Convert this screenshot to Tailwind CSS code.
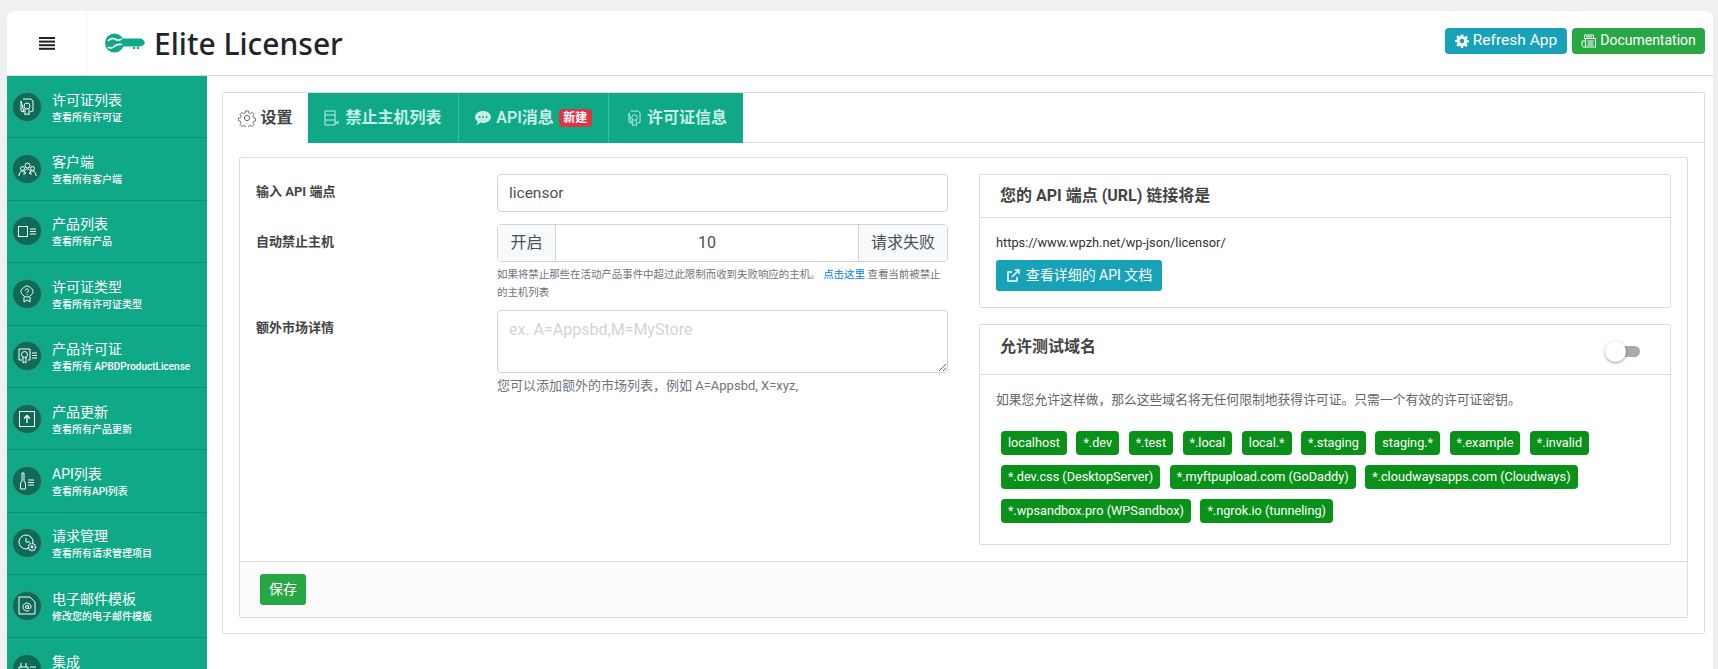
<!DOCTYPE html>
<html>
<head>
<meta charset="utf-8" />
<title>Elite Licenser</title>
<script src="https://cdn.jsdelivr.net/npm/@tailwindcss/browser@4"></script>
</head>
<body class="h-[669px] overflow-hidden bg-[#f0f0f0] font-['Roboto','Noto_Sans_CJK_SC',sans-serif] text-[#444]">
<div class="ml-[7px] mt-[11px] h-[658px] w-[1706px] flex flex-col bg-white rounded-tl-lg rounded-tr-lg overflow-hidden">

	<!-- header -->
	<header class="h-[65px] shrink-0 flex items-center border-b border-[#ddd]">
		<div class="w-[80px] h-full flex items-center justify-center border-r border-[#f2f2f2]">
			<svg width="16" height="13" viewBox="0 0 16 13" fill="#222"><rect y="0" width="16" height="2"/><rect y="3.6" width="16" height="2"/><rect y="7.2" width="16" height="2"/><rect y="10.8" width="16" height="2"/></svg>
		</div>
		<svg class="ml-[18px]" width="40" height="20" viewBox="0 0 40 20" fill="#0fa987">
			<circle cx="9.500" cy="10" r="9.500"/>
			<path d="M15 5.500h20.500l3 1.500 1.500 3-1.500 2-3 1.500H15z"/>
			<rect x="28" y="14" width="2" height="2"/><rect x="32" y="14" width="2" height="2"/>
			<path d="M3 8c2-3 6-3 8-1.500s4 0 6-.5M3 14c2 1.500 5 1 7-1s4-2 7-1.500" stroke="#fff" stroke-width="1.700" fill="none"/>
		</svg>
		<h1 class="ml-[9px] mt-[1px] text-[30px] leading-none font-medium text-[#212529] font-['Noto_Sans',sans-serif]">Elite Licenser</h1>
		<div class="ml-auto mr-[8px] flex gap-[5px] -mt-[5px]">
			<a class="w-[122px] h-[26px] flex items-center justify-center gap-[4px] rounded bg-[#17a2b8] text-white text-[15.500px]">
				<svg width="14" height="14" viewBox="0 0 24 24" fill="#fff"><path d="M10 1h4l.6 3.200 2 .8 2.700-1.800 2.800 2.800-1.800 2.700.8 2L24 11v3l-3.200.6-.8 2 1.800 2.700-2.800 2.800-2.700-1.800-2 .8L13.600 24h-3.200l-.6-3.200-2-.8-2.700 1.800-2.800-2.800 1.800-2.700-.8-2L0 13.600v-3.200l3.200-.6.800-2L2.200 5.100 5 2.300l2.700 1.800 2-.8zM12 8a4 4 0 1 0 0 8 4 4 0 0 0 0-8z" fill-rule="evenodd"/></svg>
				Refresh App
			</a>
			<a class="w-[133px] h-[26px] flex items-center justify-center gap-[4px] rounded bg-[#28a745] text-white text-[14px]">
				<svg width="15" height="14" viewBox="0 0 15 14" fill="none" stroke="#fff" stroke-width="1"><path d="M3.500 5V1h9v3M5 2.800h6"/><rect x="4.500" y="4.500" width="10" height="8.500"/><path d="M6.500 7h6M6.500 9h6M6.500 11h6M4.500 7H1v3.500A2 2 0 0 0 3 13h2"/></svg>
				Documentation
			</a>
		</div>
	</header>

	<div class="flex flex-1 min-h-0">
		<!-- sidebar -->
		<aside class="w-[200px] shrink-0 bg-[#0fa987] text-white overflow-hidden">
			<div class="h-[62.400px] flex items-center border-b border-[#0c8f73]">
				<div class="ml-[6px] w-[28px] h-[28px] shrink-0 rounded-full bg-[#0d6b57] ring-1 ring-[#3d8f7e] flex items-center justify-center">
					<svg width="14" height="18" viewBox="0 0 14 18" fill="none" stroke="#fff" stroke-width="1"><path d="M3 1h8l2 2v10l-3 1M4 14l-3-1V3z"/><circle cx="7" cy="8" r="3"/><path d="M5 11v6l2-1.500L9 17v-6"/></svg>
				</div>
				<div class="ml-[11px] mt-[1px]">
					<div class="text-[14px] leading-[21px]">许可证列表</div>
					<div class="text-[10px] leading-[14px] font-medium">查看所有许可证</div>
				</div>
			</div>
			<div class="h-[62.400px] flex items-center border-b border-[#0c8f73]">
				<div class="ml-[6px] w-[28px] h-[28px] shrink-0 rounded-full bg-[#0d6b57] ring-1 ring-[#3d8f7e] flex items-center justify-center">
					<svg width="19" height="15" viewBox="0 0 19 15" fill="none" stroke="#fff" stroke-width="1"><circle cx="9.500" cy="3.500" r="2.500"/><circle cx="4.500" cy="6.500" r="2"/><circle cx="14.500" cy="6.500" r="2"/><path d="M1 14c0-3 1.500-5 3.500-5s3 1 3 3M18 14c0-3-1.500-5-3.500-5s-3 1-3 3M6 13c0-4 1.500-6 3.500-6s3.500 2 3.500 6"/></svg>
				</div>
				<div class="ml-[11px] mt-[1px]">
					<div class="text-[14px] leading-[21px]">客户端</div>
					<div class="text-[10px] leading-[14px] font-medium">查看所有客户端</div>
				</div>
			</div>
			<div class="h-[62.400px] flex items-center border-b border-[#0c8f73]">
				<div class="ml-[6px] w-[28px] h-[28px] shrink-0 rounded-full bg-[#0d6b57] ring-1 ring-[#3d8f7e] flex items-center justify-center">
					<svg width="18" height="11" viewBox="0 0 18 11" fill="none" stroke="#fff" stroke-width="1"><rect x=".5" y=".5" width="9" height="10"/><path d="M12 3h6M12 5.500h6M12 8h6"/></svg>
				</div>
				<div class="ml-[11px] mt-[1px]">
					<div class="text-[14px] leading-[21px]">产品列表</div>
					<div class="text-[10px] leading-[14px] font-medium">查看所有产品</div>
				</div>
			</div>
			<div class="h-[62.400px] flex items-center border-b border-[#0c8f73]">
				<div class="ml-[6px] w-[28px] h-[28px] shrink-0 rounded-full bg-[#0d6b57] ring-1 ring-[#3d8f7e] flex items-center justify-center">
					<svg width="14" height="18" viewBox="0 0 14 18" fill="none" stroke="#fff" stroke-width="1"><path d="M7 1c2 0 3 1 3.500 2C12 3 13 5 13 6.500S12 9.500 11 10c-1 1.500-2.500 2-4 2s-3-.5-4-2C2 9.500 1 8 1 6.500S2 3 3.500 3C4 2 5 1 7 1z"/><path d="M4 12v5l3-2 3 2v-5"/><path d="M5.500 5.500C5.500 4.500 6 4 7 4s1.500.5 1.500 1.500S7 7 7 8M7 9v1"/></svg>
				</div>
				<div class="ml-[11px] mt-[1px]">
					<div class="text-[14px] leading-[21px]">许可证类型</div>
					<div class="text-[10px] leading-[14px] font-medium">查看所有许可证类型</div>
				</div>
			</div>
			<div class="h-[62.400px] flex items-center border-b border-[#0c8f73]">
				<div class="ml-[6px] w-[28px] h-[28px] shrink-0 rounded-full bg-[#0d6b57] ring-1 ring-[#3d8f7e] flex items-center justify-center">
					<svg width="19" height="16" viewBox="0 0 19 16" fill="none" stroke="#fff" stroke-width="1"><path d="M12 1H1v11h3M12 1v11h-2"/><circle cx="6.500" cy="6.500" r="3"/><path d="M5 9v6l1.500-1L8 15V9"/><path d="M14 5h5M14 7.500h5M14 10h5"/></svg>
				</div>
				<div class="ml-[11px] mt-[1px]">
					<div class="text-[14px] leading-[21px]">产品许可证</div>
					<div class="text-[10px] leading-[14px] font-medium">查看所有 APBDProductLicense</div>
				</div>
			</div>
			<div class="h-[62.400px] flex items-center border-b border-[#0c8f73]">
				<div class="ml-[6px] w-[28px] h-[28px] shrink-0 rounded-full bg-[#0d6b57] ring-1 ring-[#3d8f7e] flex items-center justify-center">
					<svg width="16" height="16" viewBox="0 0 16 16" fill="none" stroke="#fff" stroke-width="1"><rect x=".5" y=".5" width="15" height="15"/><path d="M8 12V5M5 7.500 8 4.500l3 3" stroke-width="1.300"/></svg>
				</div>
				<div class="ml-[11px] mt-[1px]">
					<div class="text-[14px] leading-[21px]">产品更新</div>
					<div class="text-[10px] leading-[14px] font-medium">查看所有产品更新</div>
				</div>
			</div>
			<div class="h-[62.400px] flex items-center border-b border-[#0c8f73]">
				<div class="ml-[6px] w-[28px] h-[28px] shrink-0 rounded-full bg-[#0d6b57] ring-1 ring-[#3d8f7e] flex items-center justify-center">
					<svg width="16" height="18" viewBox="0 0 16 18" fill="none" stroke="#fff" stroke-width="1"><path d="M3 1h2v8l1.500 2v6h-5v-6L3 9z"/><path d="M9 8h6M9 10.500h6M9 13h6"/></svg>
				</div>
				<div class="ml-[11px] mt-[1px]">
					<div class="text-[14px] leading-[21px]">API列表</div>
					<div class="text-[10px] leading-[14px] font-medium">查看所有API列表</div>
				</div>
			</div>
			<div class="h-[62.400px] flex items-center border-b border-[#0c8f73]">
				<div class="ml-[6px] w-[28px] h-[28px] shrink-0 rounded-full bg-[#0d6b57] ring-1 ring-[#3d8f7e] flex items-center justify-center">
					<svg width="19" height="18" viewBox="0 0 19 18" fill="none" stroke="#fff" stroke-width="1"><circle cx="8" cy="8" r="7"/><path d="M8 4v4h4"/><circle cx="14" cy="13" r="3.500" fill="#0d6b57" stroke-width="1.600" stroke-dasharray="1.500 .8"/><circle cx="14" cy="13" r="1" fill="#fff"/></svg>
				</div>
				<div class="ml-[11px] mt-[1px]">
					<div class="text-[14px] leading-[21px]">请求管理</div>
					<div class="text-[10px] leading-[14px] font-medium">查看所有请求管理项目</div>
				</div>
			</div>
			<div class="h-[62.400px] flex items-center border-b border-[#0c8f73]">
				<div class="ml-[6px] w-[28px] h-[28px] shrink-0 rounded-full bg-[#0d6b57] ring-1 ring-[#3d8f7e] flex items-center justify-center">
					<svg width="18" height="19" viewBox="0 0 18 19" fill="none" stroke="#fff" stroke-width="1"><path d="M1 1h11l5 5v12H1z"/><circle cx="9" cy="11" r="1.500"/><path d="M10.500 9.500v2.500c0 1.200 2.500 1 2.500-1a4 4 0 1 0-2 3.500"/></svg>
				</div>
				<div class="ml-[11px] mt-[1px]">
					<div class="text-[14px] leading-[21px]">电子邮件模板</div>
					<div class="text-[10px] leading-[14px] font-medium">修改您的电子邮件模板</div>
				</div>
			</div>
			<div class="h-[62.400px] flex items-center">
				<div class="ml-[6px] w-[28px] h-[28px] shrink-0 rounded-full bg-[#0d6b57] ring-1 ring-[#3d8f7e] flex items-center justify-center">
					<svg width="18" height="14" viewBox="0 0 18 14" fill="none" stroke="#fff" stroke-width="1"><path d="M3 1v4M8 1v4M1 5h9v8H1zM12 5h6M12 8h6"/></svg>
				</div>
				<div class="ml-[11px] mt-[1px]">
					<div class="text-[14px] leading-[21px]">集成</div>
					<div class="text-[10px] leading-[14px] font-medium">查看所有集成</div>
				</div>
			</div>
		</aside>

		<!-- main -->
		<main class="flex-1 min-w-0 pl-[15px] pr-[8px] pt-[16px]">
			<div class="h-[542px] border border-[#ddd] rounded-[2px] bg-white">
				<nav class="h-[50px] flex border-b border-[#ddd]">
					<a class="w-[85px] h-[50px] bg-white flex items-center justify-center gap-[4px] font-semibold text-[16px] text-[#444]">
						<svg width="18" height="18" viewBox="0 0 24 24" fill="none" stroke="#555" stroke-width="1.200"><circle cx="12" cy="12" r="3.500"/><path d="M10 1.500h4l.6 3 2.400 1 2.600-1.700 2.800 2.800-1.700 2.600 1 2.400 3 .6v4l-3 .6-1 2.400 1.700 2.600-2.800 2.800-2.600-1.700-2.400 1-.6 3h-4l-.6-3-2.400-1-2.600 1.700-2.800-2.800 1.700-2.600-1-2.400-3-.6v-4l3-.6 1-2.400-1.700-2.600 2.800-2.800 2.600 1.700 2.400-1z" transform="translate(1.200 1.200) scale(.9)"/></svg>
						设置
					</a>
					<a class="w-[151px] h-[50px] bg-[#0fa987] text-[#c5efe5] flex items-center justify-center gap-[5px] font-semibold text-[16px] border-r border-[#3dbba0]">
						<svg width="16" height="16" viewBox="0 0 16 16" fill="none" stroke="#c5efe5" stroke-width="1"><path d="M1 1h10v14H1zM1 5h10M1 10h10M11 11l4 3M15 11l-4 3"/></svg>
						禁止主机列表
					</a>
					<a class="w-[150px] h-[50px] bg-[#0fa987] text-[#c5efe5] flex items-center justify-center gap-[5px] font-semibold text-[16px] border-r border-[#3dbba0]">
						<svg width="16" height="14" viewBox="0 0 16 14" fill="#c5efe5"><path d="M8 0c4.400 0 8 2.700 8 6s-3.600 6-8 6c-1 0-2-.1-2.800-.4C4 12.800 2.400 14 1 14c1-1 1.600-2.300 1.700-3.600C1 9.300 0 7.700 0 6c0-3.300 3.600-6 8-6z"/><circle cx="4.500" cy="6" r="1" fill="#0fa987"/><circle cx="8" cy="6" r="1" fill="#0fa987"/><circle cx="11.500" cy="6" r="1" fill="#0fa987"/></svg>
						API消息
						<span class="px-[4.500px] h-[18px] flex items-center rounded-[4px] bg-[#dc3545] text-white text-[12px] font-bold">新建</span>
					</a>
					<a class="w-[134px] h-[50px] pl-[3px] bg-[#0fa987] text-[#c5efe5] flex items-center justify-center gap-[6px] font-semibold text-[16px]">
						<svg width="13" height="17" viewBox="0 0 14 18" fill="none" stroke="#c5efe5" stroke-width="1"><path d="M3 1h8l2 2v10l-3 1M4 14l-3-1V3z"/><circle cx="7" cy="8" r="3"/><path d="M5 11v6l2-1.500L9 17v-6"/></svg>
						许可证信息
					</a>
				</nav>

				<div class="mt-[14px] mx-[16px] h-[461px] border border-[#ddd] rounded-[2px] flex flex-col">
					<div class="flex-1 flex min-h-0">
						<!-- left form -->
						<div class="w-[739px] pl-[16px] pt-[16px]">
							<div class="flex">
								<label class="w-[241px] pt-[9px] text-[13px] font-bold leading-[18px]">输入 API 端点</label>
								<input class="w-[451px] h-[38px] px-[11px] border border-[#ced4da] rounded text-[15.500px] text-[#495057] bg-white outline-none" value="licensor" />
							</div>
							<div class="flex mt-[12px]">
								<label class="w-[241px] pt-[9px] text-[13px] font-bold leading-[18px]">自动禁止主机</label>
								<div class="w-[451px]">
									<div class="h-[38px] flex border border-[#ced4da] rounded text-[16px] text-[#495057]">
										<span class="w-[58px] flex items-center justify-center bg-[#f8f9fa] border-r border-[#ced4da]">开启</span>
										<span class="flex-1 flex items-center justify-center">10</span>
										<span class="w-[89px] flex items-center justify-center bg-[#f8f9fa] border-l border-[#ced4da]">请求失败</span>
									</div>
									<p class="mt-[4px] text-[10.450px] leading-[18px] text-[#6c757d]">如果将禁止那些在活动产品事件中超过此限制而收到失败响应的主机。 <a class="text-[#007bff]">点击这里</a> 查看当前被禁止的主机列表</p>
								</div>
							</div>
							<div class="flex mt-[8px]">
								<label class="w-[241px] pt-[9px] text-[13px] font-bold leading-[18px]">额外市场详情</label>
								<div class="w-[451px]">
									<textarea class="block w-full h-[63px] px-[11px] py-[7px] border border-[#ced4da] rounded text-[16px] leading-[24px] outline-none placeholder:text-[#d4d4d4]" placeholder="ex. A=Appsbd,M=MyStore"></textarea>
									<p class="mt-[4px] text-[13px] leading-[18px] text-[#6c757d]">您可以添加额外的市场列表，例如 A=Appsbd, X=xyz,</p>
								</div>
							</div>
						</div>

						<!-- right cards -->
						<div class="w-[692px] pt-[16px]">
							<section class="h-[134px] border border-[#ddd] rounded-[2px]">
								<h3 class="h-[43px] pl-[20px] flex items-center border-b border-[#ddd] text-[16px] font-bold">您的 API 端点 (URL) 链接将是</h3>
								<div class="pl-[16px] pt-[16px]">
									<p class="text-[12.800px] leading-[18px] text-[#333]">https://www.wpzh.net/wp-json/licensor/</p>
									<a class="mt-[8px] w-[166px] h-[31px] flex items-center justify-center gap-[6px] rounded-[3px] bg-[#17a2b8] text-white text-[14px]">
										<svg width="14" height="14" viewBox="0 0 14 14" fill="none" stroke="#fff" stroke-width="1.500"><path d="M11 8v4H2V3h4M6 8l7-7M9 1h4v4"/></svg>
										查看详细的 API 文档
									</a>
								</div>
							</section>
							<section class="mt-[16px] h-[221px] border border-[#ddd] rounded-[2px]">
								<div class="h-[50px] pl-[20px] pr-[30px] flex items-center justify-between border-b border-[#ddd]">
									<h3 class="text-[16px] font-bold -mt-[5px]">允许测试域名</h3>
									<span class="relative w-[34px] h-[11px] rounded-full bg-[#aaa] mt-[3px]">
										<span class="absolute -left-[1px] -top-[5px] w-[21px] h-[21px] rounded-full bg-white shadow-[0_1px_3px_rgba(0,0,0,0.4)]"></span>
									</span>
								</div>
								<p class="pl-[16px] mt-[16px] text-[12.800px] leading-[18px] text-[#666]">如果您允许这样做，那么这些域名将无任何限制地获得许可证。只需一个有效的许可证密钥。</p>
								<div class="ml-[21px] mr-[10px] mt-[22px] flex flex-wrap gap-x-[9.500px] gap-y-[10px] text-[12.700px] text-white">
									<span class="h-[24px] px-[7px] flex items-center rounded-[4px] bg-[#0a9119]">localhost</span>
									<span class="h-[24px] px-[7px] flex items-center rounded-[4px] bg-[#0a9119]">*.dev</span>
									<span class="h-[24px] px-[7px] flex items-center rounded-[4px] bg-[#0a9119]">*.test</span>
									<span class="h-[24px] px-[7px] flex items-center rounded-[4px] bg-[#0a9119]">*.local</span>
									<span class="h-[24px] px-[7px] flex items-center rounded-[4px] bg-[#0a9119]">local.*</span>
									<span class="h-[24px] px-[7px] flex items-center rounded-[4px] bg-[#0a9119]">*.staging</span>
									<span class="h-[24px] px-[7px] flex items-center rounded-[4px] bg-[#0a9119]">staging.*</span>
									<span class="h-[24px] px-[7px] flex items-center rounded-[4px] bg-[#0a9119]">*.example</span>
									<span class="h-[24px] px-[7px] flex items-center rounded-[4px] bg-[#0a9119]">*.invalid</span>
									<span class="h-[24px] px-[7px] flex items-center rounded-[4px] bg-[#0a9119]">*.dev.css (DesktopServer)</span>
									<span class="h-[24px] px-[7px] flex items-center rounded-[4px] bg-[#0a9119]">*.myftpupload.com (GoDaddy)</span>
									<span class="h-[24px] px-[7px] flex items-center rounded-[4px] bg-[#0a9119]">*.cloudwaysapps.com (Cloudways)</span>
									<span class="h-[24px] px-[7px] flex items-center rounded-[4px] bg-[#0a9119]">*.wpsandbox.pro (WPSandbox)</span>
									<span class="h-[24px] px-[7px] flex items-center rounded-[4px] bg-[#0a9119]">*.ngrok.io (tunneling)</span>
								</div>
							</section>
						</div>
					</div>
					<div class="h-[56px] shrink-0 bg-[#fcfcfc] border-t border-[#ddd] pl-[20px] flex items-center">
						<button class="w-[46px] h-[31px] rounded-[3px] bg-[#28a745] text-white text-[14px]">保存</button>
					</div>
				</div>
			</div>
		</main>
	</div>
</div>
</body>
</html>
